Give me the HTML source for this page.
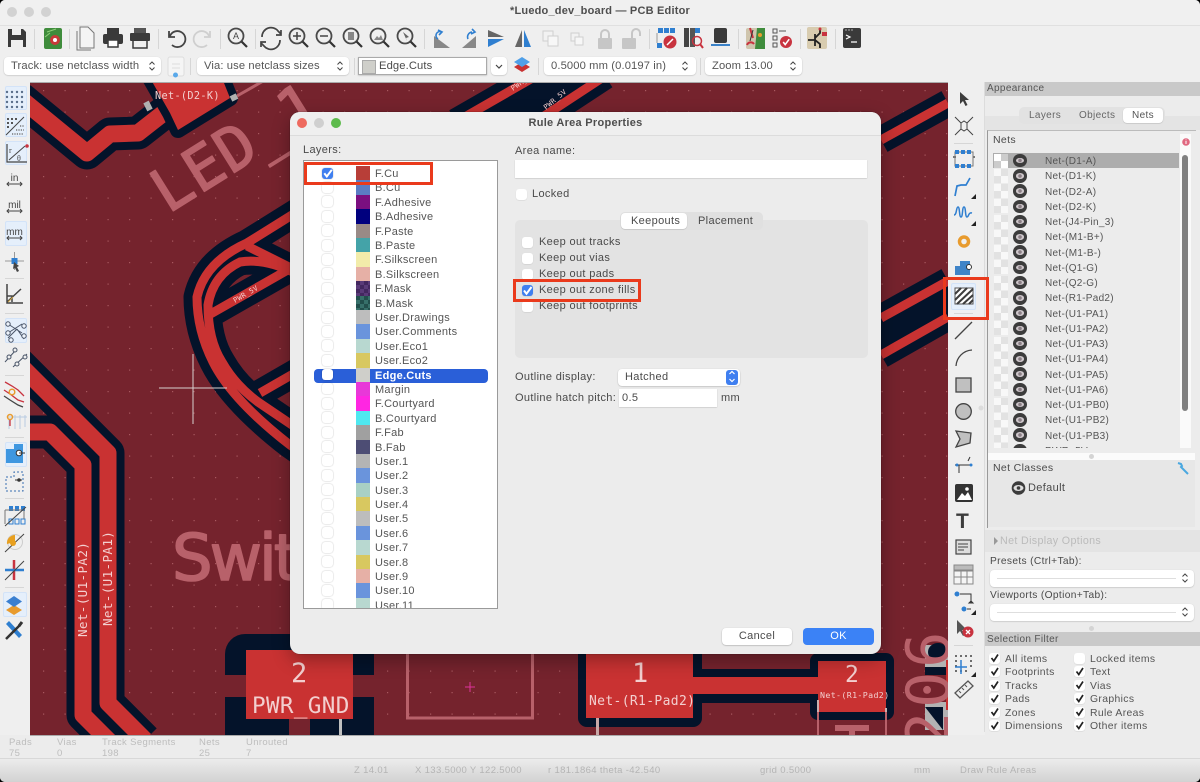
<!DOCTYPE html>
<html><head><meta charset="utf-8"><title>PCB Editor</title>
<style>
html,body{margin:0;padding:0;background:#000;width:1200px;height:782px;overflow:hidden}
#a{position:relative;width:1200px;height:782px;background:#ececec;border-radius:5px;overflow:hidden;font-family:"Liberation Sans",sans-serif;font-size:11px;letter-spacing:.35px;color:#4a4a4a}
#a>*,.abs{position:absolute}
.t{position:absolute;white-space:nowrap;line-height:16px}
.sel{position:absolute;background:#fff;border-radius:4px;box-shadow:0 .5px 1.5px rgba(0,0,0,.22);height:18px;line-height:18px;padding-left:7px;box-sizing:border-box;white-space:nowrap;font-size:11.2px;letter-spacing:.12px;color:#555}
.sep{position:absolute;background:#d6d6d6;width:1px}
.hs{position:absolute;background:#d6d6d6;height:1px}
.act{position:absolute;background:#e5effb;border:1px solid #d3e3f8;box-sizing:border-box;border-radius:2px}
.cb{position:absolute;width:11px;height:11px;background:#fff;border-radius:3px;box-shadow:0 .5px 1px rgba(0,0,0,.12)}
.blue{background:#3f7ff0}
#dlg{left:290px;top:112px;width:591px;height:542px;background:#ececec;border-radius:10px;box-shadow:0 0 0 .5px rgba(0,0,0,.2),0 6px 18px rgba(0,0,0,.3);overflow:hidden}
#list{position:absolute;left:13px;top:48px;width:195px;height:449px;box-sizing:border-box;background:#fff;border:1px solid #9a9a9a;overflow:hidden;padding-top:5.1px;letter-spacing:.27px}
#list div{position:relative;height:14.4px;line-height:16.4px;padding-left:71px;white-space:nowrap;color:#555}
#list i{position:absolute;left:18px;top:1.5px;width:11px;height:11px;background:#fff;border-radius:3px;box-shadow:0 0 1.5px rgba(0,0,0,.3)}
#list b{position:absolute;left:51.5px;top:0;width:14px;height:14.4px}
#list .s{color:#fff;font-weight:bold}
#nets{position:absolute;left:993px;top:153px;width:186px;height:295px;overflow:hidden}
#nets div{position:relative;height:15.25px;line-height:17px;padding-left:52px;white-space:nowrap;color:#555;font-size:10px;letter-spacing:.3px}
#nets b{position:absolute;left:1px;top:.5px;width:14px;height:14px;background:repeating-conic-gradient(#e2e2e2 0 25%,#f8f8f8 0 50%) 0 0/14px 14px}
#nets i{position:absolute;left:20px;top:.9px;width:13.5px;height:13.5px;border-radius:50%;background:#3c3c3c}
#nets i:after{content:"";position:absolute;left:2.5px;top:4px;width:8.5px;height:5.5px;border-radius:50%;background:radial-gradient(circle,#8a7f85 0 1.6px,#cfc8cc 2px)}
.flt{position:absolute;white-space:nowrap;font-size:10.4px;color:#555;line-height:13.6px}
.box{position:absolute;border:3.5px solid #ea3a1c;box-sizing:border-box}
</style></head><body>
<div id="a">

<svg style="left:30px;top:83px" width="918" height="652" viewBox="30 83 918 652">
<defs>
<pattern id="dots" x="43" y="90" width="21.5" height="21.5" patternUnits="userSpaceOnUse"><rect x="0" y="0" width="1.2" height="1.2" fill="#a8585f"/></pattern>
<path id="tr" d="M20 98L87 153L110 134L138 133L170 108M10 355L108 453V703L145 740M10 432H50L83 465V715L110 742"/>
<path id="lp" d="M300 210L247 243Q205 262 197 297Q197 330 213 362Q232 400 290 445L300 452M295 273Q265 258 240 262Q213 275 208 305Q208 340 222 362Q235 385 258 402L295 427M207 316L300 263M247 246L295 270M260 393L300 370M456 122L536 76M535 122L605 76M881 140L948 103M881 318L948 281M881 355L948 317"/>
</defs>
<rect x="30" y="83" width="918" height="652" fill="#75232d"/>
<rect x="30" y="83" width="918" height="652" fill="url(#dots)"/>
<g fill="none" stroke="#04132a" stroke-linejoin="round">
<use href="#tr" stroke-width="33"/>
<use href="#lp" stroke-width="27"/>
</g>
<path d="M490 90L530 83H590L550 120H500Z" fill="#04132a"/>
<path d="M881 318L948 281V317L881 355Z" fill="#04132a"/>
<g fill="none" stroke="#c93232" stroke-linejoin="round">
<use href="#tr" stroke-width="17"/>
<use href="#lp" stroke-width="9"/>
</g>
<polygon points="150,78 222,78 230,98 178,130 170,113" fill="#c93232" stroke="#04132a" stroke-width="16" stroke-linejoin="round" paint-order="stroke"/>
<path d="M146 102l4 8M231 99l6-3" stroke="#b0b0b0" stroke-width="6"/>
<path d="M237 96L265 80" stroke="#b8616a" stroke-width="3"/>

<g fill="#b8616a" stroke="#b8616a" stroke-width="1.6" stroke-linejoin="round" font-family="'DejaVu Sans Mono',monospace">
<text transform="translate(168,214) rotate(-32)" font-size="60" letter-spacing="1">LED_1</text>
<text x="172" y="580" font-size="64" font-family="'DejaVu Sans',sans-serif" letter-spacing="-3">Swit</text>
</g>

<!-- pad clearances -->
<rect x="225" y="634" width="149" height="120" rx="20" fill="#04132a"/>
<rect x="225" y="675" width="21" height="22" fill="#75232d"/>
<rect x="353" y="675" width="21" height="22" fill="#75232d"/>
<rect x="289" y="719" width="21" height="20" fill="#75232d"/>
<rect x="246" y="650" width="107" height="69" fill="#c93232"/>
<rect x="339" y="719" width="3" height="16" fill="#c0c0c0"/>
<rect x="407.500" y="650" width="125" height="68" fill="none" stroke="#b8616a" stroke-width="3"/>
<path d="M465 687h10M470 682v10" stroke="#e0339c" stroke-width="1"/>
<rect x="578" y="640" width="124" height="87" rx="9" fill="#04132a"/>
<rect x="693" y="669" width="125" height="34" fill="#04132a"/>
<rect x="810" y="653" width="84" height="67" rx="8" fill="#04132a"/>
<rect x="586" y="650" width="107" height="68" fill="#c93232"/>
<rect x="693" y="677" width="130" height="17" fill="#c93232"/>
<rect x="818" y="661" width="68" height="51" fill="#c93232"/>
<path d="M597.500 718V735" stroke="#c7a7a7" stroke-width="3"/>
<path d="M818 700V712M886 708V712" stroke="#c9b0b0" stroke-width="2"/>
<path d="M818 712V735M886 712V735" stroke="#b8616a" stroke-width="2"/>
<path d="M835 728H869" stroke="#b8616a" stroke-width="6"/>
<path d="M852 728V735" stroke="#b8616a" stroke-width="6"/>
<!-- 206 -->
<rect x="925" y="645" width="23" height="30" fill="#b3b3b3"/>
<ellipse cx="938" cy="652" rx="10" ry="9" fill="#04132a"/>
<rect x="925" y="667" width="23" height="8" fill="#04132a"/>
<rect x="925" y="702" width="23" height="28" fill="#b3b3b3"/>
<path d="M925 707H943V730Z" fill="#04132a"/>
<rect x="946" y="660" width="2" height="50" fill="#c93232"/>
<text transform="translate(949,748) rotate(-90)" font-family="'DejaVu Sans Mono',monospace" font-size="60" letter-spacing="4" fill="#b8616a">206</text>

<g fill="#f3cfcf" font-family="'DejaVu Sans Mono',monospace">
<text x="155" y="99" font-size="10.200">Net-(D2-K)</text>
<text transform="translate(87,637) rotate(-90)" font-size="12.600">Net-(U1-PA2)</text>
<text transform="translate(112,626) rotate(-90)" font-size="12.600">Net-(U1-PA1)</text>
<text transform="translate(235,303) rotate(-30)" font-size="7">PWR_5V</text>
<text transform="translate(513,91) rotate(-35)" font-size="7">PWR_5V</text>
<text transform="translate(546,110) rotate(-40)" font-size="7">PWR_5V</text>
<text x="252" y="713" font-size="22.600">PWR_GND</text>
<text x="291" y="682" font-size="27">2</text>
<text x="632" y="682" font-size="27">1</text>
<text x="589" y="705" font-size="13">Net-(R1-Pad2)</text>
<text x="845" y="682" font-size="23">2</text>
<text x="820" y="698" font-size="8.300">Net-(R1-Pad2)</text>
</g>
<path d="M159 388H227M193 354V424" stroke="#d8d0d0" stroke-width="1"/>
</svg>

<!-- title / toolbar chrome -->
<div style="left:0;top:0;width:1200px;height:26px;background:#f0f0f0;border-bottom:1px solid #e0e0e0;box-sizing:border-box"></div>
<div style="left:0;top:26px;width:1200px;height:56px;background:#efefef"></div>
<div style="left:0;top:82px;width:30px;height:653px;background:#efefef"></div>
<div style="left:948px;top:82px;width:37px;height:653px;background:#efefef"></div>
<div style="left:985px;top:82px;width:215px;height:653px;background:#ececec"></div>
<div style="left:30px;top:82px;width:918px;height:1px;background:#aaa"></div>
<div style="left:30px;top:735px;width:918px;height:1px;background:#aaa"></div>
<div style="left:0;top:736px;width:985px;height:22px;background:#ececec"></div>
<div style="left:0;top:758px;width:1200px;height:24px;background:linear-gradient(#ececec,#d2d2d2);border-top:1px solid #d8d8d8;box-sizing:border-box"></div>

<div class="t" style="left:0;width:1200px;text-align:center;top:3px;font-weight:bold;letter-spacing:.2px;color:#4e4e4e">*Luedo_dev_board — PCB Editor</div>
<div style="left:7px;top:7px;width:10px;height:10px;border-radius:50%;background:#d2d2d2"></div>
<div style="left:24px;top:7px;width:10px;height:10px;border-radius:50%;background:#d2d2d2"></div>
<div style="left:41px;top:7px;width:10px;height:10px;border-radius:50%;background:#d2d2d2"></div>

<!-- second row -->
<div class="sel" style="left:4px;top:57px;width:157px">Track: use netclass width</div>
<div class="sel" style="left:197px;top:57px;width:152px">Via: use netclass sizes</div>
<div class="sel" style="left:358px;top:57px;width:129px;border-radius:0;border:1px solid #aaa;padding-left:20px;line-height:17px;color:#4a4a4a">Edge.Cuts</div>
<div style="left:362px;top:60px;width:12px;height:12px;background:#cfcfca;border:1px solid #aaa"></div>
<div class="sel" style="left:491px;top:57px;width:16px"></div>
<div class="sel" style="left:544px;top:57px;width:152px">0.5000 mm (0.0197 in)</div>
<div class="sel" style="left:705px;top:57px;width:97px">Zoom 13.00</div>
<div class="sep" style="left:190px;top:58px;height:17px"></div>
<div class="sep" style="left:354px;top:58px;height:17px"></div>
<div class="sep" style="left:538px;top:58px;height:17px"></div>
<div class="sep" style="left:700px;top:58px;height:17px"></div>

<!-- toolbar seps -->
<div class="sep" style="left:34px;top:29px;height:20px"></div>
<div class="sep" style="left:69px;top:29px;height:20px"></div>
<div class="sep" style="left:158px;top:29px;height:20px"></div>
<div class="sep" style="left:220px;top:29px;height:20px"></div>
<div class="sep" style="left:255px;top:29px;height:20px"></div>
<div class="sep" style="left:424px;top:29px;height:20px"></div>
<div class="sep" style="left:649px;top:29px;height:20px"></div>
<div class="sep" style="left:738px;top:29px;height:20px"></div>
<div class="sep" style="left:800px;top:29px;height:20px"></div>
<div class="sep" style="left:835px;top:29px;height:20px"></div>

<!-- left toolbar states -->
<div class="act" style="left:5px;top:86px;width:22px;height:24px"></div>
<div class="act" style="left:5px;top:113px;width:22px;height:24px"></div>
<div class="act" style="left:5px;top:141px;width:22px;height:24px"></div>
<div class="act" style="left:5px;top:221px;width:22px;height:25px"></div>
<div class="act" style="left:5px;top:318px;width:22px;height:25px"></div>
<div class="act" style="left:5px;top:442px;width:22px;height:25px"></div>
<div class="act" style="left:3px;top:592px;width:24px;height:25px"></div>
<div class="hs" style="left:5px;top:278px;width:19px"></div>
<div class="hs" style="left:5px;top:313px;width:19px"></div>
<div class="hs" style="left:5px;top:375px;width:19px"></div>
<div class="hs" style="left:5px;top:437px;width:19px"></div>
<div class="hs" style="left:5px;top:498px;width:19px"></div>
<div class="hs" style="left:5px;top:587px;width:19px"></div>
<div class="act" style="left:951px;top:283px;width:25px;height:27px"></div>
<div class="hs" style="left:954px;top:143px;width:19px"></div>
<div class="hs" style="left:954px;top:313px;width:19px"></div>
<div class="hs" style="left:954px;top:645px;width:19px"></div>

<!-- Appearance -->
<div style="left:985px;top:82px;width:215px;height:14px;background:#c9c9c9"></div>
<div class="t" style="left:987px;top:81px;font-size:10px;color:#555">Appearance</div>
<div style="left:985px;top:116px;width:215px;height:14px;background:#e4e4e4"></div>
<div style="left:1019px;top:107px;width:146px;height:17px;background:#e2e2e2;border-radius:5px"></div>
<div style="left:1123px;top:108px;width:40px;height:15px;background:#fff;border-radius:4px;box-shadow:0 .5px 1px rgba(0,0,0,.2)"></div>
<div class="t" style="left:1029px;top:108px;font-size:10px;color:#666">Layers</div>
<div class="t" style="left:1079px;top:108px;font-size:10px;color:#666">Objects</div>
<div class="t" style="left:1132px;top:108px;font-size:10px;color:#555">Nets</div>
<div style="left:987px;top:130px;width:209px;height:398px;box-sizing:border-box;border-left:1px solid #999;border-top:1px solid #bbb;background:#ececec"></div>
<div class="t" style="left:993px;top:132px;font-size:10.500px">Nets</div>
<div style="left:1180px;top:134px;width:11px;height:314px;background:#fafafa"></div>
<div style="left:1182px;top:155px;width:6px;height:256px;background:#808080;border-radius:3px"></div>
<div style="left:993px;top:153px;width:186px;height:14.500px;background:#adadad"></div>
<div id="nets">
<div><b style="background:repeating-conic-gradient(#ccc 0 25%,#fff 0 50%) 0 0/14px 14px"></b><i></i>Net-(D1-A)</div>
<div><b></b><i></i>Net-(D1-K)</div>
<div><b></b><i></i>Net-(D2-A)</div>
<div><b></b><i></i>Net-(D2-K)</div>
<div><b></b><i></i>Net-(J4-Pin_3)</div>
<div><b></b><i></i>Net-(M1-B+)</div>
<div><b></b><i></i>Net-(M1-B-)</div>
<div><b></b><i></i>Net-(Q1-G)</div>
<div><b></b><i></i>Net-(Q2-G)</div>
<div><b></b><i></i>Net-(R1-Pad2)</div>
<div><b></b><i></i>Net-(U1-PA1)</div>
<div><b></b><i></i>Net-(U1-PA2)</div>
<div><b></b><i></i>Net-(U1-PA3)</div>
<div><b></b><i></i>Net-(U1-PA4)</div>
<div><b></b><i></i>Net-(U1-PA5)</div>
<div><b></b><i></i>Net-(U1-PA6)</div>
<div><b></b><i></i>Net-(U1-PB0)</div>
<div><b></b><i></i>Net-(U1-PB2)</div>
<div><b></b><i></i>Net-(U1-PB3)</div>
<div><b></b><i></i>PWR_5V</div>
</div>
<div style="left:988px;top:453px;width:207px;height:7px;background:#fbfbfb"></div>
<div style="left:1089px;top:454px;width:5px;height:5px;border-radius:50%;background:#d4d4d4"></div>
<div style="left:988px;top:460px;width:207px;height:67px;background:#e7e7e7"></div>
<div class="t" style="left:993px;top:460px;font-size:10.500px">Net Classes</div>
<div class="t" style="left:1028px;top:480px;font-size:11px">Default</div>
<div style="left:985px;top:530px;width:215px;height:22px;background:#e4e4e4"></div>
<div class="t" style="left:1000px;top:533px;font-size:10.700px;color:#bbb">Net Display Options</div>
<div class="t" style="left:990px;top:554px;font-size:10.200px">Presets (Ctrl+Tab):</div>
<div class="sel" style="left:990px;top:570px;width:204px;height:17px"></div>
<div class="hs" style="left:997px;top:578px;width:179px;background:#dedede"></div>
<div class="t" style="left:990px;top:588px;font-size:10.200px">Viewports (Option+Tab):</div>
<div class="sel" style="left:990px;top:604px;width:204px;height:17px"></div>
<div class="hs" style="left:997px;top:612px;width:179px;background:#dedede"></div>
<div style="left:1089px;top:626px;width:5px;height:5px;border-radius:50%;background:#d4d4d4"></div>
<div style="left:985px;top:632px;width:215px;height:14px;background:#c9c9c9"></div>
<div class="t" style="left:987px;top:632px;font-size:10px;color:#555">Selection Filter</div>
<div class="flt" style="left:1005px;top:652.500px">All items<br>Footprints<br>Tracks<br>Pads<br>Zones<br>Dimensions</div>
<div class="flt" style="left:1090px;top:652.500px">Locked items<br>Text<br>Vias<br>Graphics<br>Rule Areas<br>Other items</div>
<div class="cb" style="left:989px;top:652.500px"></div><div class="cb" style="left:989px;top:666px"></div><div class="cb" style="left:989px;top:679.500px"></div><div class="cb" style="left:989px;top:693px"></div><div class="cb" style="left:989px;top:706.500px"></div><div class="cb" style="left:989px;top:720px"></div>
<div class="cb" style="left:1074px;top:652.500px"></div><div class="cb" style="left:1074px;top:666px"></div><div class="cb" style="left:1074px;top:679.500px"></div><div class="cb" style="left:1074px;top:693px"></div><div class="cb" style="left:1074px;top:706.500px"></div><div class="cb" style="left:1074px;top:720px"></div>
<div style="left:984px;top:82px;width:1px;height:650px;background:#dcdcdc"></div>

<!-- status -->
<div class="t" style="left:9px;top:737px;font-size:9.500px;color:#bdbdbd;line-height:11px">Pads<br>75</div>
<div class="t" style="left:57px;top:737px;font-size:9.500px;color:#bdbdbd;line-height:11px">Vias<br>0</div>
<div class="t" style="left:102px;top:737px;font-size:9.500px;color:#bdbdbd;line-height:11px">Track Segments<br>198</div>
<div class="t" style="left:199px;top:737px;font-size:9.500px;color:#bdbdbd;line-height:11px">Nets<br>25</div>
<div class="t" style="left:246px;top:737px;font-size:9.500px;color:#bdbdbd;line-height:11px">Unrouted<br>7</div>
<div class="t" style="left:354px;top:763px;font-size:9.500px;color:#b4b4b4">Z 14.01</div>
<div class="t" style="left:415px;top:763px;font-size:9.500px;color:#b4b4b4">X 133.5000  Y 122.5000</div>
<div class="t" style="left:548px;top:763px;font-size:9.500px;color:#b4b4b4">r 181.1864  theta -42.540</div>
<div class="t" style="left:760px;top:763px;font-size:9.500px;color:#b4b4b4">grid 0.5000</div>
<div class="t" style="left:914px;top:763px;font-size:9.500px;color:#b4b4b4">mm</div>
<div class="t" style="left:960px;top:763px;font-size:9.500px;color:#b4b4b4">Draw Rule Areas</div>

<!-- dialog -->
<div id="dlg">
<div class="abs" style="left:0;top:0;width:591px;height:23px;background:#efefef;border-bottom:1px solid #dcdcdc"></div>
<div class="abs" style="left:7px;top:6px;width:10px;height:10px;border-radius:50%;background:#ee6a5f"></div>
<div class="abs" style="left:24px;top:6px;width:10px;height:10px;border-radius:50%;background:#cfcfcf"></div>
<div class="abs" style="left:41px;top:6px;width:10px;height:10px;border-radius:50%;background:#5dbb4c"></div>
<div class="t" style="left:0;width:591px;text-align:center;top:3px;font-weight:bold;letter-spacing:.28px;color:#4e4e4e">Rule Area Properties</div>
<div class="t" style="left:13px;top:30px">Layers:</div>
<div id="list">
<div style="position:absolute;left:9.500px;top:207.500px;width:174px;height:14px;padding:0;background:#2a5fd8;border-radius:4px"></div>
<div><i style="background:#3f7ff0"></i><b style="background:#b83e38"></b>F.Cu</div>
<div><i></i><b style="background:#5b7cc4"></b>B.Cu</div>
<div><i></i><b style="background:#7b0f80"></b>F.Adhesive</div>
<div><i></i><b style="background:#00007e"></b>B.Adhesive</div>
<div><i></i><b style="background:#998a86"></b>F.Paste</div>
<div><i></i><b style="background:#44a3a8"></b>B.Paste</div>
<div><i></i><b style="background:#f2ecaa"></b>F.Silkscreen</div>
<div><i></i><b style="background:#e6b0a6"></b>B.Silkscreen</div>
<div><i></i><b style="background:repeating-conic-gradient(#5a3a78 0 25%,#43275f 0 50%) 0 0/8px 8px"></b>F.Mask</div>
<div><i></i><b style="background:repeating-conic-gradient(#37706a 0 25%,#224f4c 0 50%) 0 0/8px 8px"></b>B.Mask</div>
<div><i></i><b style="background:#bdbdbd"></b>User.Drawings</div>
<div><i></i><b style="background:#6a94dc"></b>User.Comments</div>
<div><i></i><b style="background:#b8d8d0"></b>User.Eco1</div>
<div><i></i><b style="background:#d8c860"></b>User.Eco2</div>
<div class="s"><i></i><b style="background:#cfcfca"></b>Edge.Cuts</div>
<div><i></i><b style="background:#e838d8"></b>Margin</div>
<div><i></i><b style="background:#ff26e2"></b>F.Courtyard</div>
<div><i></i><b style="background:#4fe8f0"></b>B.Courtyard</div>
<div><i></i><b style="background:#a0a0a0"></b>F.Fab</div>
<div><i></i><b style="background:#4d4d74"></b>B.Fab</div>
<div><i></i><b style="background:#b4b4b4"></b>User.1</div>
<div><i></i><b style="background:#6a94dc"></b>User.2</div>
<div><i></i><b style="background:#a8d0c4"></b>User.3</div>
<div><i></i><b style="background:#d8c860"></b>User.4</div>
<div><i></i><b style="background:#bdbdbd"></b>User.5</div>
<div><i></i><b style="background:#6a94dc"></b>User.6</div>
<div><i></i><b style="background:#b8d8d0"></b>User.7</div>
<div><i></i><b style="background:#d8c860"></b>User.8</div>
<div><i></i><b style="background:#e6b0a6"></b>User.9</div>
<div><i></i><b style="background:#6a94dc"></b>User.10</div>
<div><i></i><b style="background:#b8d8d0"></b>User.11</div>
</div>
<div class="t" style="left:225px;top:31px">Area name:</div>
<div class="abs" style="left:225px;top:48px;width:352px;height:18px;background:#fff;box-shadow:0 .5px 1px rgba(0,0,0,.2)"></div>
<div class="cb" style="left:226px;top:77px"></div>
<div class="t" style="left:242px;top:74px">Locked</div>
<div class="abs" style="left:225px;top:108px;width:353px;height:138px;background:#e3e3e3;border-radius:5px"></div>
<div class="abs" style="left:330px;top:100px;width:143px;height:18px;background:#e0e0e0;border-radius:5px"></div>
<div class="abs" style="left:331px;top:101px;width:66px;height:16px;background:#fff;border-radius:4px;box-shadow:0 .5px 1px rgba(0,0,0,.2)"></div>
<div class="t" style="left:341px;top:101px">Keepouts</div>
<div class="t" style="left:408px;top:101px">Placement</div>
<div class="cb" style="left:232px;top:125px"></div><div class="t" style="left:249px;top:122px">Keep out tracks</div>
<div class="cb" style="left:232px;top:141px"></div><div class="t" style="left:249px;top:138px">Keep out vias</div>
<div class="cb" style="left:232px;top:157px"></div><div class="t" style="left:249px;top:154px">Keep out pads</div>
<div class="cb blue" style="left:232px;top:173px"></div><div class="t" style="left:249px;top:170px">Keep out zone fills</div>
<div class="cb" style="left:232px;top:189px"></div><div class="t" style="left:249px;top:186px">Keep out footprints</div>
<div class="t" style="left:225px;top:257px">Outline display:</div>
<div class="abs" style="left:328px;top:257px;width:122px;height:17px;background:#fff;border-radius:4px;box-shadow:0 .5px 1.500px rgba(0,0,0,.25)"></div>
<div class="abs" style="left:436px;top:258px;width:12px;height:15px;background:#3f7ff0;border-radius:3px"></div>
<div class="t" style="left:335px;top:257px">Hatched</div>
<div class="t" style="left:225px;top:278px">Outline hatch pitch:</div>
<div class="abs" style="left:329px;top:277px;width:98px;height:18px;background:#fff;box-shadow:0 .5px 1px rgba(0,0,0,.2)"></div>
<div class="t" style="left:332px;top:278px">0.5</div>
<div class="t" style="left:431px;top:278px">mm</div>
<div class="abs" style="left:432px;top:516px;width:70px;height:17px;background:#fff;border-radius:4px;box-shadow:0 .5px 1.500px rgba(0,0,0,.3);text-align:center;line-height:17px;color:#4a4a4a">Cancel</div>
<div class="abs" style="left:513px;top:516px;width:71px;height:17px;background:#3b82f6;border-radius:4px;text-align:center;line-height:17px;color:#fff">OK</div>
</div>

<!-- icons overlay -->
<svg style="left:0;top:0" width="1200" height="782" viewBox="0 0 1200 782" fill="none">
<defs>
<g id="mag"><circle cx="-2" cy="-2" r="7.500" stroke="#4a4a4a" stroke-width="1.800"/><path d="M3.500 3.500L9 9" stroke="#333" stroke-width="2.200"/></g>
<path id="ck" d="M-3 0l2.300 3L3.500-3.500" stroke="#222" stroke-width="1.700"/>
<path id="wk" d="M-3.500 0l2.500 3.200L4-3.500" stroke="#fff" stroke-width="2"/>
<path id="ud" d="M-2.500-1.500L0-4L2.500-1.500M-2.500 1.500L0 4L2.500 1.500" stroke="#444" stroke-width="1"/>
<g id="eye"><circle r="6.800" fill="#3c3c3c"/><ellipse rx="5" ry="3" fill="#dfdfdf"/><circle r="1.800" fill="#3c3c3c"/></g>
</defs>

<!-- top bar -->
<g transform="translate(17,38)"><path d="M-9-9H6L9-6V9H-9Z" fill="#3a3a3a"/><rect x="-5" y="-9" width="9" height="6" fill="#efefef"/><rect x="-6" y="2" width="12" height="7" fill="#efefef"/></g>
<g transform="translate(53,38)"><rect x="-9" y="-10" width="18" height="21" rx="2" fill="#3f8c3c"/><circle cx="2" cy="2" r="5" fill="#c93a3a"/><circle cx="2" cy="2" r="2" fill="#fff"/><path d="M-6-6L3-9M-8-1L-3-5" stroke="#8fd07a"/></g>
<g transform="translate(85,38)" stroke="#777"><path d="M-5-11H3L9-5V10H-5Z" fill="#f4f4f4"/><path d="M-8-7V12H6"/></g>
<g transform="translate(113,38)"><rect x="-6" y="-10" width="12" height="6" fill="#3a3a3a"/><rect x="-10" y="-4" width="20" height="10" rx="2" fill="#3a3a3a"/><rect x="-5" y="2" width="10" height="7" fill="#fff" stroke="#3a3a3a" stroke-width="1.500"/></g>
<g transform="translate(140,38)"><rect x="-6" y="-10" width="12" height="5" fill="#555"/><rect x="-10" y="-5" width="20" height="8" rx="1" fill="#3a3a3a"/><path d="M-7 3V10H7V3" stroke="#3a3a3a" stroke-width="1.500"/></g>
<path d="M169 31v6h6M170 36a8 8 0 1 1 2 9" stroke="#444" stroke-width="1.800"/>
<path d="M210 31v6h-6M209 36a8 8 0 1 0-2 9" stroke="#cfcfcf" stroke-width="1.800"/>
<use href="#mag" transform="translate(238,38)"/><text x="233" y="39" font-size="9" font-family="Liberation Sans" fill="#444" letter-spacing="0">A</text>
<path d="M262 37a9 9 0 0 1 16-6l3 3M281 30v5h-5M280 40a9 9 0 0 1-16 6l-3-3M261 47v-5h5" stroke="#444" stroke-width="1.700"/>
<use href="#mag" transform="translate(299,38)"/><path d="M293 36h8M297 32v8" stroke="#444" stroke-width="1.500"/>
<use href="#mag" transform="translate(326,38)"/><path d="M320 36h8" stroke="#444" stroke-width="1.500"/>
<use href="#mag" transform="translate(353,38)"/><rect x="348" y="32" width="6" height="8" fill="#888"/>
<use href="#mag" transform="translate(380,38)"/><path d="M374 40l3-4 2 2 2-3 2 5z" fill="#888"/>
<use href="#mag" transform="translate(407,38)"/><path d="M403 32l6 5-3 1 1 3z" fill="#666"/>
<path d="M434 46V48H450L434 36Z" fill="#888"/><path d="M438 39a4 4 0 0 1 4-7M438 30l4 2-3 3" stroke="#2f7fd0" stroke-width="1.600"/>
<path d="M476 36V48H462Z" fill="#888"/><path d="M468 39a5 5 0 0 1 4-7M472 29l3 3-4 2" stroke="#2f7fd0" stroke-width="1.600"/>
<path d="M488 30L504 37H488Z" fill="#666"/><path d="M488 39H504L488 47Z" fill="#2f7fd0"/>
<path d="M522 30V47H515Z" fill="#666"/><path d="M524 30V47H531Z" fill="#2f7fd0"/>
<g stroke="#cfcfcf"><rect x="543" y="31" width="10" height="10" fill="#f2f2f2"/><rect x="548" y="36" width="10" height="10" fill="#f7f7f7"/><rect x="571" y="33" width="8" height="8" fill="#f2f2f2"/><rect x="575" y="37" width="8" height="8" fill="#f7f7f7"/></g>
<rect x="598" y="38" width="14" height="11" rx="1" fill="#c6c6c6"/><path d="M601 38v-4a4 4 0 0 1 8 0v4" stroke="#c6c6c6" stroke-width="2"/>
<rect x="622" y="38" width="14" height="11" rx="1" fill="#c6c6c6"/><path d="M632 38v-5a4 4 0 0 1 8 0v3" stroke="#c6c6c6" stroke-width="2"/>
<g transform="translate(666,38)"><rect x="-8" y="-10" width="5" height="5" fill="#2f7fd0"/><rect x="-2" y="-10" width="5" height="5" fill="#2f7fd0"/><rect x="4" y="-10" width="5" height="5" fill="#2f7fd0"/><rect x="-9" y="5" width="5" height="5" fill="#2f7fd0"/><path d="M-9-5V5" stroke="#999"/><circle cx="4" cy="4" r="6.500" fill="#c8333f"/><path d="M1 7L7 1" stroke="#fff" stroke-width="1.500"/></g>
<g transform="translate(693,38)"><rect x="-9" y="-10" width="5" height="19" fill="#444"/><rect x="-3" y="-10" width="5" height="19" fill="#555"/><circle cx="4" cy="3" r="4.500" stroke="#c8333f" stroke-width="1.500"/><path d="M7 6l3 4" stroke="#c8333f" stroke-width="2"/><rect x="2" y="-10" width="5" height="5" fill="#2f7fd0"/></g>
<g transform="translate(720,38)"><rect x="-6" y="-10" width="13" height="15" rx="2" fill="#3a3a3a"/><path d="M-9 7H10" stroke="#3b82c8" stroke-width="2"/></g>
<g transform="translate(755,38)"><rect x="-9" y="-10" width="19" height="21" rx="2" fill="#cfc5ad"/><path d="M2-10H10V11H0Z" fill="#3f8c3c"/><path d="M-5-10L-2 0M-8 7a4 4 0 0 1 7-1" stroke="#c8333f" stroke-width="2"/><circle cx="5" cy="-3" r="2" fill="#e89b2e"/><path d="M-2-8L-5 3" stroke="#333"/></g>
<g transform="translate(782,38)"><rect x="-9" y="-9" width="4" height="4" stroke="#555"/><rect x="-9" y="-2" width="4" height="4" stroke="#555"/><rect x="-9" y="5" width="4" height="4" stroke="#555"/><path d="M-3-7H4" stroke="#555"/><circle cx="4" cy="4" r="6" fill="#c8333f"/><use href="#wk" transform="translate(4,4) scale(.8)"/></g>
<g transform="translate(817,38)"><rect x="-10" y="-11" width="20" height="22" rx="2" fill="#d8ccb0"/><path d="M-9 2H-2M-2-4V8M-2 0L3-5V-9M-2 2L3 6V10" stroke="#222" stroke-width="1.800"/><circle cx="3" cy="-9" r="1.500" fill="#c8333f"/><rect x="5" y="-6" width="5" height="4" fill="#c8333f"/></g>
<g transform="translate(852,38)"><rect x="-9" y="-10" width="18" height="20" rx="2" fill="#3a3a3a"/><path d="M-6-3l4 2-4 2M-1 4H5" stroke="#fff" stroke-width="1.200"/><path d="M-7-8H1" stroke="#aaa" stroke-dasharray="2 1"/></g>

<!-- second row glyphs -->
<use href="#ud" transform="translate(152,66)"/>
<use href="#ud" transform="translate(340,66)"/>
<use href="#ud" transform="translate(685,66)"/>
<use href="#ud" transform="translate(793,66)"/>
<path d="M496 65l3 3 3-3" stroke="#444" stroke-width="1.200"/>
<rect x="168" y="57" width="16" height="19" rx="2" fill="#f5f5f5" stroke="#ddd"/><path d="M172 64h8M172 68h8" stroke="#ddd"/><circle cx="175.500" cy="75" r="2.500" fill="#5aa9ea"/>
<path d="M522 62l8 5-8 5-8-5z" fill="#c83232"/><path d="M522 57l8 5-8 5-8-5z" fill="#4f9fe8"/>

<!-- left bar -->
<g fill="#5a6f8a" transform="translate(6,91)"><circle cx="1" cy="1" r="1.200"/><circle cx="6" cy="1" r="1.200"/><circle cx="11" cy="1" r="1.200"/><circle cx="16" cy="1" r="1.200"/><circle cx="1" cy="6" r="1.200"/><circle cx="6" cy="6" r="1.200"/><circle cx="11" cy="6" r="1.200"/><circle cx="16" cy="6" r="1.200"/><circle cx="1" cy="11" r="1.200"/><circle cx="6" cy="11" r="1.200"/><circle cx="11" cy="11" r="1.200"/><circle cx="16" cy="11" r="1.200"/><circle cx="1" cy="16" r="1.200"/><circle cx="6" cy="16" r="1.200"/><circle cx="11" cy="16" r="1.200"/><circle cx="16" cy="16" r="1.200"/></g>
<g transform="translate(6,117)"><path d="M0 18L18 0" stroke="#444"/><path d="M1 2h10M1 6h7M1 10h4" stroke="#555" stroke-width="2" stroke-dasharray="2 2"/><path d="M6 17h12M10 13h8M14 9h4" stroke="#777" stroke-dasharray="1.200 1.200" stroke-width="1.500"/></g>
<g transform="translate(5,143)"><path d="M2 1V19H22" stroke="#444" stroke-width="1.200"/><path d="M4 17L20 3" stroke="#444"/><circle cx="22" cy="3" r="1.800" fill="#c8333f"/><text x="4" y="10" font-size="8" font-family="Liberation Serif" fill="#444" letter-spacing="0">r</text><text x="12" y="18" font-size="8" font-family="Liberation Serif" fill="#444" letter-spacing="0">θ</text></g>
<text x="14.500" y="181" text-anchor="middle" font-size="10" font-family="Liberation Sans" fill="#444" letter-spacing="0">in</text><path d="M7 184H22M9 182l-2 2 2 2M20 182l2 2-2 2" stroke="#444"/>
<text x="14.500" y="208" text-anchor="middle" font-size="10" font-family="Liberation Sans" fill="#444" letter-spacing="0">mil</text><path d="M7 211H22M9 209l-2 2 2 2M20 209l2 2-2 2" stroke="#444"/>
<text x="14.500" y="235" text-anchor="middle" font-size="10" font-family="Liberation Sans" fill="#444" letter-spacing="0">mm</text><path d="M7 238H22M9 236l-2 2 2 2M20 236l2 2-2 2" stroke="#444"/>
<path d="M5 261H24M14.500 252V270" stroke="#999"/><rect x="11.500" y="258" width="6" height="6" fill="#2f7fd0"/><path d="M14 262l5 4-2 1 2 4-2 1-2-4-2 1z" fill="#444"/>
<path d="M7 284V303H23M7 302L21 289M7 296h5v6" stroke="#444" stroke-width="1.500"/><path d="M8 302l5-5" stroke="#c8a040"/>
<g transform="translate(5,321)" stroke="#4a5568"><path d="M3 3L17 12M3 12L17 3M3 17L12 8M12 8L19 18"/><circle cx="3" cy="3" r="2.200" fill="#eef4fc"/><circle cx="3" cy="12" r="2.200" fill="#eef4fc"/><circle cx="19" cy="5" r="2.200" fill="#eef4fc"/><circle cx="19" cy="15" r="2.200" fill="#eef4fc"/><circle cx="6" cy="19" r="2.200" fill="#eef4fc"/></g>
<g transform="translate(5,348)" stroke="#4a5568"><path d="M0 14L10 3M8 19L22 6"/><circle cx="4" cy="9" r="2" fill="#efefef"/><circle cx="10" cy="2" r="2" fill="#efefef"/><circle cx="12" cy="16" r="2" fill="#efefef"/><circle cx="20" cy="9" r="2" fill="#efefef"/></g>
<path d="M5 382l7 4 6 4 6 6M4 390l6 4 8 6 6 2" stroke="#c8333f" stroke-width="1.300"/><path d="M4 396l6 4 8 5 5 2" stroke="#444" stroke-width="1.300"/><circle cx="12" cy="392" r="2.800" stroke="#e89b2e" stroke-width="1.500"/>
<g transform="translate(5,411)"><path d="M4 8V18M10 4V18M15 4V18M20 4V16M2 6H22" stroke="#b8cbe2"/><circle cx="5" cy="6" r="2.500" stroke="#e89b2e" stroke-width="1.500"/><path d="M5 9V15" stroke="#c8333f" stroke-width="1.300"/></g>
<path d="M6 449h8v-5h9v19H6z" fill="#3f97e0"/><circle cx="19" cy="453" r="2.800" fill="#fff" stroke="#333"/><path d="M19 453h6" stroke="#333"/>
<path d="M6 477h8v-5h9v19H6z" stroke="#3a6fb0" stroke-dasharray="2 2"/><path d="M15 480h7" stroke="#333"/><circle cx="19" cy="480" r="1.800" fill="#333"/>
<g transform="translate(4,506)"><rect x="5" y="0" width="4" height="5" fill="#2f7fd0"/><rect x="11" y="0" width="4" height="5" fill="#2f7fd0"/><rect x="17" y="0" width="4" height="5" fill="#2f7fd0"/><rect x="5" y="13" width="4" height="5" stroke="#2f7fd0"/><rect x="11" y="13" width="4" height="5" stroke="#2f7fd0"/><rect x="17" y="13" width="4" height="5" stroke="#2f7fd0"/><path d="M1 4H20V13M1 4V18" stroke="#777"/><path d="M1 20L22 1" stroke="#444"/></g>
<circle cx="15" cy="542" r="7.500" stroke="#ccc"/><path d="M15 535a8 8 0 0 0-8 9l8-2z" fill="#e8a020"/><path d="M5 552L24 534" stroke="#444"/><circle cx="13" cy="543" r="3" fill="#e8a020"/>
<path d="M14 560V580" stroke="#c8333f" stroke-width="2.500"/><path d="M5 570H24" stroke="#2f7fd0" stroke-width="2.500"/><path d="M5 580L24 561" stroke="#444"/>
<path d="M14 605l8 5-8 5-8-5z" fill="#e89b2e"/><path d="M14 596l8 5.500-8 5.500-8-5.500z" fill="#3a7fd0"/>
<path d="M6 624l13 14 3-3-13-14" fill="#2f7fd0"/><path d="M6 639l14-14" stroke="#333" stroke-width="2.500"/><path d="M19 626l3-4" stroke="#333" stroke-width="3"/>

<!-- right bar -->
<path d="M960 92l0 12 3-3 2.500 5 2-1-2.500-5h4z" fill="#3c3c3c"/>
<path d="M955 117l6 6 M973 117l-6 6M955 135l6-6M973 135l-6-6" stroke="#444"/><path d="M961 123l3-2 3 2v6l-3 2-3-2z" stroke="#444"/>
<rect x="955" y="152" width="18" height="14" stroke="#777"/><g fill="#2f7fd0"><rect x="955" y="150" width="4" height="4"/><rect x="961" y="150" width="4" height="4"/><rect x="967" y="150" width="4" height="4"/><rect x="955" y="164" width="4" height="4"/><rect x="961" y="164" width="4" height="4"/><rect x="967" y="164" width="4" height="4"/></g><path d="M953 157h3M973 157h2" stroke="#777" stroke-width="2"/>
<path d="M955 196l2-10 4-1h5l4-7" stroke="#2f7fd0" stroke-width="1.700"/><path d="M971 199l5-5v5z" fill="#222"/>
<path d="M954 215c3 0 2-8 4-8s1 10 3 10 1-10 3-10 1 10 3 10 1-5 5-4" stroke="#2f7fd0" stroke-width="1.500"/><path d="M971 226l5-5v5z" fill="#222"/>
<circle cx="964" cy="241.500" r="4.500" stroke="#e89b2e" stroke-width="3.500"/>
<path d="M955 275v-9h5v-5h10v14z" fill="#3f84c8"/><circle cx="969" cy="267" r="2.500" fill="#fff" stroke="#333"/>
<g transform="translate(955,288)"><rect width="18" height="16" fill="#fff" stroke="#555"/><path d="M0 6L6 0M0 12L12 0M2 16L18 1M8 16L18 7M14 16L18 12" stroke="#3c3c3c" stroke-width="2"/></g>
<path d="M955 339L972 322" stroke="#444" stroke-width="1.300"/>
<path d="M956 366a17 17 0 0 1 16-16" stroke="#444" stroke-width="1.300"/>
<rect x="956" y="378" width="15" height="14" fill="#c0c0c0" stroke="#444" stroke-width="1.300"/>
<circle cx="963.500" cy="411.500" r="7.800" fill="#c0c0c0" stroke="#444" stroke-width="1.300"/>
<path d="M956 431l15 2-1 10-14 4 4-8z" fill="#c0c0c0" stroke="#444" stroke-width="1.300"/>
<path d="M955 465h16M959 465v8M968 461l2-4" stroke="#333"/><circle cx="957" cy="465" r="1.500" fill="#2f7fd0"/><circle cx="971" cy="465" r="1.500" fill="#2f7fd0"/>
<rect x="955" y="484" width="18" height="18" rx="2" fill="#333"/><path d="M957 500l5-7 3 3 3-4 4 8z" fill="#fff"/><circle cx="967" cy="489" r="1.800" fill="#fff"/>
<text x="956" y="528" font-size="21" font-family="Liberation Sans" font-weight="bold" fill="#3c3c3c" letter-spacing="0">T</text>
<rect x="956" y="540" width="15" height="14" fill="#ddd" stroke="#444" stroke-width="1.200"/><path d="M958 544h10M958 547h10M958 550h6" stroke="#444"/>
<g stroke="#888"><rect x="954" y="565" width="19" height="19" fill="#f5f5f5"/><path d="M954 571H973M954 577H973M961 565V584M967 565V584"/><rect x="954" y="565" width="19" height="5" fill="#bbb"/></g>
<circle cx="957" cy="594" r="2.500" fill="#2f7fd0"/><path d="M960 594h11v9M971 601l-2 2h4z" stroke="#333"/><circle cx="964" cy="609" r="2.500" fill="#2f7fd0"/><path d="M967 609h4" stroke="#333"/><path d="M971 615l5-5v5z" fill="#222"/>
<path d="M957 620v14l3-3 3 5 2-1-3-5h5z" fill="#555"/><circle cx="968" cy="632" r="5.500" fill="#c8333f"/><path d="M966 630l4 4M970 630l-4 4" stroke="#fff" stroke-width="1.300"/>
<g fill="#444" transform="translate(955,655)"><circle cx="1" cy="1" r="1"/><circle cx="6" cy="1" r="1"/><circle cx="11" cy="1" r="1"/><circle cx="16" cy="1" r="1"/><circle cx="1" cy="6" r="1"/><circle cx="16" cy="6" r="1"/><circle cx="1" cy="11" r="1"/><circle cx="16" cy="11" r="1"/><circle cx="1" cy="16" r="1"/><circle cx="6" cy="16" r="1"/><circle cx="11" cy="16" r="1"/></g><path d="M955 667h12M961 660v14" stroke="#2f7fd0" stroke-width="1.500"/><path d="M971 677l5-5v5z" fill="#222"/>
<path d="M955 693l13-12 5 5-13 12z" stroke="#555" stroke-width="1.300"/><path d="M961 693l-2-2M964 690l-2-2M967 687l-2-2" stroke="#555"/>
<circle cx="981" cy="408" r="2.500" fill="#dcdcdc"/>

<!-- appearance misc -->
<circle cx="1186" cy="142" r="3.800" fill="#e06880"/><path d="M1186 141v3M1186 139.500v.7" stroke="#fff"/>
<use href="#eye" transform="translate(1018.500,488)"/>
<path d="M1178 463l3 1 1 2-1 1 7 7" stroke="#4aa8e0" stroke-width="2"/>
<path d="M994 537v8l4-4z" fill="#999"/>
<use href="#ud" transform="translate(1185,578)"/>
<use href="#ud" transform="translate(1185,612)"/>
<g><use href="#ck" transform="translate(994.500,658)"/><use href="#ck" transform="translate(994.500,671.500)"/><use href="#ck" transform="translate(994.500,685)"/><use href="#ck" transform="translate(994.500,698.500)"/><use href="#ck" transform="translate(994.500,712)"/><use href="#ck" transform="translate(994.500,725.500)"/>
<use href="#ck" transform="translate(1079.500,671.500)"/><use href="#ck" transform="translate(1079.500,685)"/><use href="#ck" transform="translate(1079.500,698.500)"/><use href="#ck" transform="translate(1079.500,712)"/><use href="#ck" transform="translate(1079.500,725.500)"/></g>

<!-- dialog checks -->
<use href="#wk" transform="translate(327.800,173.300)"/>
<use href="#wk" transform="translate(527.500,290.500)"/>
<path d="M729.500 374l2.500-2.500 2.500 2.500M729.500 379l2.500 2.500 2.500-2.500" stroke="#fff" stroke-width="1.200"/>
</svg>

<!-- highlights -->
<div class="box" style="left:304px;top:162px;width:129px;height:23px"></div>
<div class="box" style="left:513px;top:279px;width:128px;height:23px"></div>
<div class="box" style="left:943px;top:277px;width:46px;height:43px"></div>
</div>
</body></html>
